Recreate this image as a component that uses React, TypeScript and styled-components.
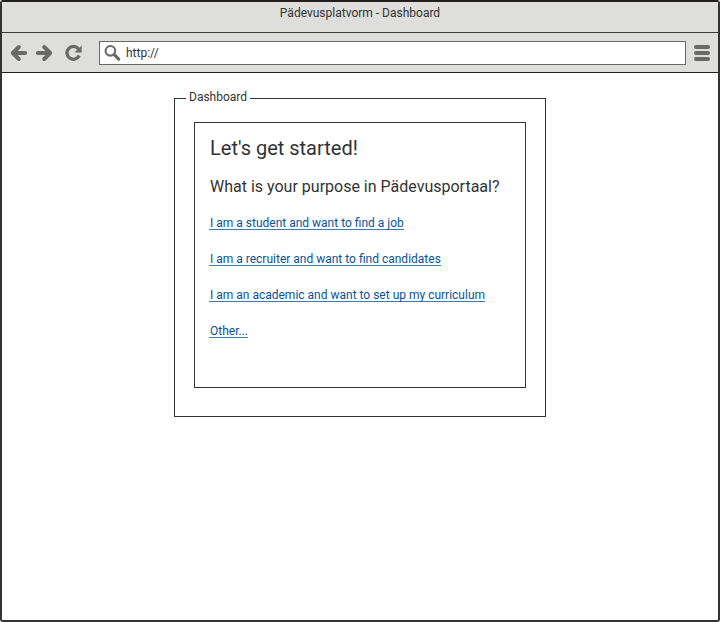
import React from "react";
import styled, { createGlobalStyle } from "styled-components";

const ink = "#333333";
const iconGrey = "#696969";

const GlobalStyle = createGlobalStyle`
  *, *::before, *::after { box-sizing: border-box; }
  body { margin: 0; background: #ffffff; font-family: Roboto, "Liberation Sans", sans-serif; }
`;

const BrowserWindow = styled.div`
  display: flex;
  flex-direction: column;
  width: 720px;
  height: 622px;
  border: 2px solid #333335;
  border-top-color: #231f20;
  border-radius: 3px;
  background: #ffffff;
  overflow: hidden;
`;

const TitleBar = styled.header`
  flex: none;
  height: 31px;
  border-bottom: 1px solid #3c3c3c;
  background: #dededd;
  color: ${ink};
  font-size: 12px;
  line-height: 22px;
  text-align: center;
`;

const Toolbar = styled.div`
  flex: none;
  display: flex;
  align-items: center;
  height: 40px;
  padding: 1px 8px 0;
  border-bottom: 1px solid #231f20;
  background: #dededd;
`;

const ToolIcon = styled.svg<{ $gap: number }>`
  display: block;
  flex: none;
  margin-right: ${(p) => p.$gap}px;
`;

const AddressField = styled.div`
  display: flex;
  align-items: center;
  flex: 1;
  height: 24px;
  margin-right: 8px;
  padding-left: 4px;
  border: 1px solid #696969;
  background: #ffffff;
  color: ${ink};
  font-size: 12px;
  line-height: 22px;
`;

const Page = styled.main`
  flex: 1;
  display: flex;
  justify-content: center;
  align-items: flex-start;
  padding-top: 25px;
`;

const Group = styled.section`
  width: 372px;
  height: 319px;
  padding: 0 19px;
  border: 1px solid ${ink};
`;

const GroupLabel = styled.div`
  width: 64px;
  height: 16px;
  margin: -10px 0 17px -8px;
  padding-left: 3px;
  background: #ffffff;
  color: ${ink};
  font-size: 12px;
  line-height: 16px;
  white-space: nowrap;
`;

const Panel = styled.div`
  height: 266px;
  padding: 12px 15px 0;
  border: 1px solid ${ink};
  color: ${ink};
  white-space: nowrap;
`;

const Heading = styled.h1`
  margin: 0;
  font-size: 20px;
  font-weight: 400;
  line-height: 26px;
`;

const Question = styled.h2`
  margin: 16px 0 17px;
  font-size: 16px;
  font-weight: 400;
  line-height: 20px;
`;

const Choices = styled.nav`
  display: flex;
  flex-direction: column;
  align-items: flex-start;
  gap: 20px;
`;

const Choice = styled.a`
  height: 16px;
  margin-left: -1px;
  padding-left: 1px;
  border-bottom: 1px solid #3c7bb3;
  color: #0b5394;
  font-size: 12px;
  line-height: 18px;
  text-decoration: none;
`;

const choices = [
  "I am a student and want to find a job",
  "I am a recruiter and want to find candidates",
  "I am an academic and want to set up my curriculum",
  "Other...",
];

function ArrowIcon({ forward = false, gap }: { forward?: boolean; gap: number }) {
  return (
    <ToolIcon $gap={gap} width="18" height="18" viewBox="0 0 18 18" fill="none" stroke={iconGrey} strokeWidth="3.9" strokeLinecap="round" strokeLinejoin="round">
      <path d={forward ? "M2.8 9H15M9.2 3L15.2 9L9.2 15" : "M15.2 9H3M8.8 3L2.8 9L8.8 15"} />
    </ToolIcon>
  );
}

export default function App() {
  return (
    <>
      <GlobalStyle />
      <BrowserWindow>
        <TitleBar>Pädevusplatvorm - Dashboard</TitleBar>
        <Toolbar>
          <ArrowIcon gap={7} />
          <ArrowIcon forward gap={12} />
          <ToolIcon $gap={16} width="18" height="18" viewBox="0 0 18 18" fill="none">
            <path d="M13.4 4.9A6.4 6.4 0 1 0 14.2 11.5" stroke={iconGrey} strokeWidth="3.3" />
            <path d="M16.6 1.5V8.6H9.5Z" fill={iconGrey} />
          </ToolIcon>
          <AddressField>
            <ToolIcon $gap={4} width="18" height="18" viewBox="0 0 18 18" fill="none" stroke={iconGrey}>
              <circle cx="6.4" cy="6.8" r="4.8" strokeWidth="2.1" />
              <path d="M10.8 11.2L14.7 15.1" strokeWidth="3.2" strokeLinecap="round" />
            </ToolIcon>
            http://
          </AddressField>
          <ToolIcon $gap={0} width="16" height="16" viewBox="0 0 16 16" fill={iconGrey}>
            <rect width="16" height="4" rx="2" />
            <rect y="6" width="16" height="4" rx="2" />
            <rect y="12" width="16" height="4" rx="2" />
          </ToolIcon>
        </Toolbar>
        <Page>
          <Group>
            <GroupLabel>Dashboard</GroupLabel>
            <Panel>
              <Heading>Let's get started!</Heading>
              <Question>What is your purpose in Pädevusportaal?</Question>
              <Choices>
                {choices.map((label) => (
                  <Choice key={label} href="#">{label}</Choice>
                ))}
              </Choices>
            </Panel>
          </Group>
        </Page>
      </BrowserWindow>
    </>
  );
}
